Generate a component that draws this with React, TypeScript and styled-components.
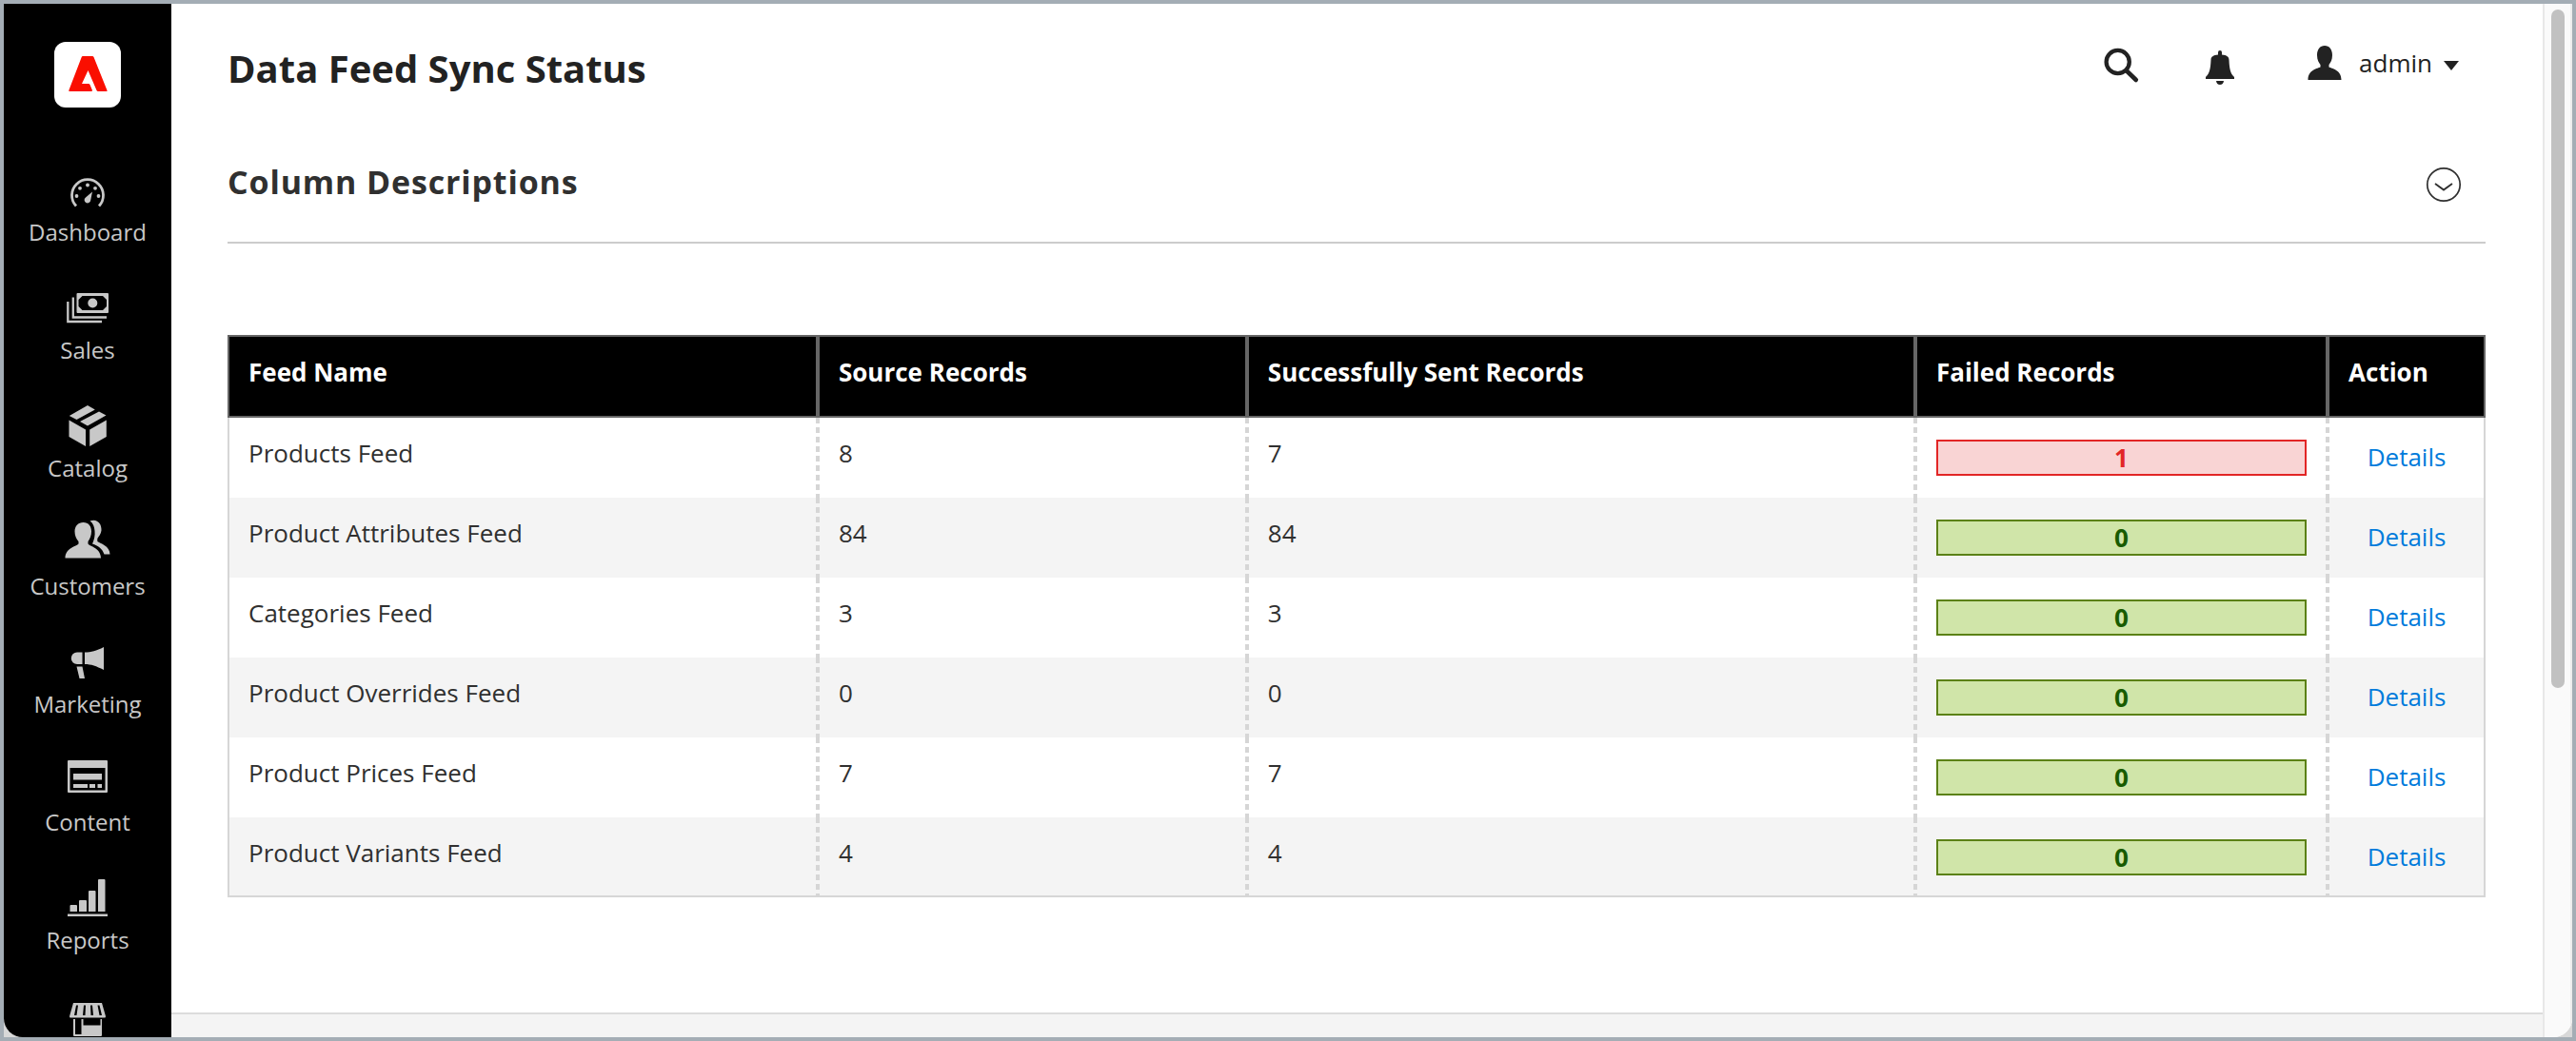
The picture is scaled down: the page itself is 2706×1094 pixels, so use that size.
import React from 'react';
import styled, { createGlobalStyle } from 'styled-components';

const Global = createGlobalStyle`
  *, *::before, *::after { box-sizing: border-box; }
  html { height: 100%; }
  body { height: 100%; margin: 0; font-family: 'Open Sans', 'Noto Sans', sans-serif; font-size: 26px; line-height: 36px; color: #303030; background: #a4adb5; }
  #root { height: 100%; }
  button { font: inherit; color: inherit; background: none; border: 0; padding: 0; cursor: pointer; }
`;

const Frame = styled.div`
  height: 100vh;
  border: 4px solid #a4adb5;
  background: #d8d8d8;
  display: flex;
`;

const Window = styled.div`
  flex: 1;
  min-width: 0;
  display: flex;
  overflow: hidden;
  background: #fff;
  border-radius: 0 0 20px 20px;
`;

const Sidebar = styled.nav`
  flex: 0 0 176px;
  background: #000;
  display: flex;
  flex-direction: column;
  align-items: center;
  overflow: hidden;
`;

const Logo = styled.a`
  display: flex;
  margin: 40px 0 51px;
`;

const Menu = styled.ul`
  list-style: none;
  margin: 0;
  padding: 0;
  width: 100%;
`;

const MenuLink = styled.a`
  height: 124px;
  padding-top: 12px;
  display: flex;
  flex-direction: column;
  align-items: center;
  gap: 4px;
  color: #c8c8c8;
  font-size: 24px;
  line-height: 32px;
  text-decoration: none;
`;

const MenuIcon = styled.svg`
  width: 60px;
  height: 48px;
  overflow: visible;
  fill: currentColor;
`;

const Page = styled.div`
  flex: 1;
  min-width: 0;
  display: flex;
  flex-direction: column;
`;

const Main = styled.main`
  flex: 1;
  padding: 34px 60px 0 59px;
`;

const Header = styled.header`
  display: flex;
  align-items: flex-start;
  justify-content: space-between;
  padding-right: 28px;
`;

const Title = styled.h1`
  margin: 0;
  font-size: 40px;
  line-height: 68px;
  font-weight: 700;
  color: #222;
`;

const Tools = styled.div`
  display: flex;
  gap: 64px;
  color: #222;
  svg { fill: currentColor; }
`;

const IconButton = styled.button`
  display: flex;
`;

const UserButton = styled.button`
  display: flex;
  align-items: center;
  padding-left: 8px;
`;

const UserName = styled.span`
  margin: 0 12px 0 18px;
`;

const Section = styled.section`
  margin-top: 40px;
  height: 110px;
  border-bottom: 2px solid #ccc;
`;

const SectionToggle = styled.button`
  width: 100%;
  padding: 23px 25px 0 0;
  display: flex;
  justify-content: space-between;
  align-items: flex-end;
`;

const SectionTitle = styled.h2`
  margin: 0;
  font-size: 34px;
  line-height: 44px;
  font-weight: 700;
  letter-spacing: .025em;
`;

const Table = styled.table`
  width: 100%;
  margin-top: 96px;
  table-layout: fixed;
  border-collapse: separate;
  border-spacing: 0;
`;

const Col = styled.col<{ $share: string }>`
  width: ${(p) => p.$share};
`;

const HeadCell = styled.th`
  height: 87px;
  padding: 19px 20px;
  vertical-align: top;
  text-align: left;
  font-weight: 700;
  color: #fff;
  background: #000;
  border: 2px solid #666;
  border-left-width: 0;
  border-right: 4px solid #666;
  &:first-child { border-left-width: 2px; }
  &:last-child { border-right-width: 2px; }
`;

const Row = styled.tr`
  &:nth-child(even) { background: #f4f4f4; }
  &:last-child td { border-bottom: 2px solid #d6d6d6; }
`;

const Cell = styled.td`
  height: 84px;
  padding: 19px 24px 0 20px;
  vertical-align: top;
  background: repeating-linear-gradient(#d6d6d6 0 6px, transparent 6px 10px) right top / 4px 100% no-repeat;
  &:first-child { border-left: 2px solid #d6d6d6; }
  &:last-child {
    padding: 23px 20px 0;
    border-right: 2px solid #d6d6d6;
    background: none;
    text-align: center;
  }
`;

const Count = styled.span<{ $failed: boolean }>`
  display: block;
  margin-top: 4px;
  border: 2px solid ${(p) => (p.$failed ? '#e22626' : '#5b8116')};
  background: ${(p) => (p.$failed ? '#f9d4d4' : '#d0e5a9')};
  color: ${(p) => (p.$failed ? '#e22626' : '#185b00')};
  font-weight: 700;
  line-height: 34px;
  text-align: center;
`;

const DetailsLink = styled.a`
  color: #007bdb;
  text-decoration: none;
`;

const Footer = styled.footer`
  height: 26px;
  border-top: 2px solid #dcdcdc;
  background: #f4f4f4;
`;

const ScrollTrack = styled.div`
  flex: 0 0 31px;
  padding: 6px 6px 0 7px;
  border-left: 2px solid #e8e8e8;
  border-right: 2px solid #ececec;
  background: #fafafa;
`;

const ScrollThumb = styled.div`
  height: 66%;
  border-radius: 8px;
  background: #c1c1c1;
`;

const menu = [
  {
    label: 'Dashboard',
    icon: (
      <>
        <path d="M18 40.500A16.500 16.500 0 1 1 42 40.500" fill="none" stroke="currentColor" strokeWidth="2.800" />
        <circle cx="18.500" cy="30" r="1.900" /><circle cx="22" cy="21.800" r="1.900" /><circle cx="30" cy="18.500" r="1.900" /><circle cx="38" cy="21.800" r="1.900" /><circle cx="41.500" cy="30" r="1.900" />
        <path d="M35 25.500L33.200 34.500A3.300 3.300 0 1 1 28 31.500Z" />
      </>
    ),
  },
  {
    label: 'Sales',
    icon: (
      <g transform="translate(0 -4)">
        <path fillRule="evenodd" d="M19.500 12H51a1 1 0 0 1 1 1V32a1 1 0 0 1-1 1H19.500a1 1 0 0 1-1-1V13a1 1 0 0 1 1-1ZM24.500 15L20.500 19V26L24.500 30H46L50 26V19L46 15Z" />
        <circle cx="35.300" cy="22.500" r="5" />
        <path d="M14.800 16.500V37.500H50M9.300 21V42H45" fill="none" stroke="currentColor" strokeWidth="2.300" />
      </g>
    ),
  },
  {
    label: 'Catalog',
    icon: (
      <path transform="translate(0 -3.500)" d="M10.800 16.500L30 5.500L37.800 10L18.500 20.500ZM22 22.500L42 12L49.500 16L30 27ZM10.500 21L28 31V48.500L10.500 38.500ZM49.800 21L32.200 31V48.500L49.800 38.500Z" />
    ),
  },
  {
    label: 'Customers',
    icon: (
      <g transform="translate(0 -6)">
        <path d="M25.500 7C31 7 34 11 34 16.500C34 21 32.500 24 30.500 27V29.500C32 32 44 34 44 44.500H6.500C6.500 34 18.500 32 20.500 29.500V27C18 24 16.500 21 16.500 16.500C16.500 11 20 7 25.500 7Z" />
        <path d="M32.500 5.500C40 2.500 45 8.500 44.500 15.500C44 19 42 21.500 40.300 24V27C43 29 53.500 31.500 53.500 40.500H47.500C45.500 34.500 41 31.500 35 29.500C37 25 38 21 37.500 16C37 11.500 36 8 32.500 5.500Z" />
      </g>
    ),
  },
  {
    label: 'Marketing',
    icon: (
      <path transform="translate(0 -5)" d="M24.500 18.500V31H19A6 6 0 0 1 19 18.500ZM27 18.500C34 18.500 39 17 47 13V37C39 33 34 31 27 31ZM18.500 33.500H24.500L27 46H21.500Z" />
    ),
  },
  {
    label: 'Content',
    icon: (
      <g transform="translate(0 -4)">
        <path fillRule="evenodd" d="M10 7H50Q51 7 51 8V40Q51 41 50 41H10Q9 41 9 40V8Q9 7 10 7ZM11.500 15V38.500H48.500V15Z" />
        <path d="M15 21H45V27.500H15ZM15 32H30V36H15ZM32 32H38V36H32ZM40.500 32H45V36H40.500Z" />
      </g>
    ),
  },
  {
    label: 'Reports',
    icon: (
      <path transform="translate(0 -4)" d="M9 44.500H51V47H9ZM11.500 42V36Q11.500 35 12.500 35H18Q19 35 19 36V42ZM21 42V31Q21 30 22 30H28Q29 30 29 31V42ZM31 42V21Q31 20 32 20H37.500Q38.500 20 38.500 21V42ZM41 42V9Q41 8 42 8H47.500Q48.500 8 48.500 9V42Z" />
    ),
  },
  {
    label: 'Stores',
    iconOnly: true,
    icon: (
      <g transform="translate(0 -4)">
        <path d="M15 14H45L49 28Q49 29.500 48 29.500H12Q11 29.500 11 28Z" />
        <path d="M18 16.500H20L18.500 27H16ZM26 16.500H28L27.500 27H25ZM33 16.500H35L36 27H33.500ZM40.500 16.500H42.500L45 27H42.500Z" fill="#000" />
        <path fillRule="evenodd" d="M15 31H45V48Q45 49 44 49H16Q15 49 15 48ZM17 31V47H23.500V31ZM25.500 31V37.500H43.500V31Z" />
      </g>
    ),
  },
];

const feeds = [
  { name: 'Products Feed', source: 8, sent: 7, failed: 1 },
  { name: 'Product Attributes Feed', source: 84, sent: 84, failed: 0 },
  { name: 'Categories Feed', source: 3, sent: 3, failed: 0 },
  { name: 'Product Overrides Feed', source: 0, sent: 0, failed: 0 },
  { name: 'Product Prices Feed', source: 7, sent: 7, failed: 0 },
  { name: 'Product Variants Feed', source: 4, sent: 4, failed: 0 },
];

export default function App() {
  return (
    <Frame>
      <Global />
      <Window>
        <Sidebar aria-label="Main menu">
          <Logo href="#" aria-label="Home">
            <svg width="70" height="69" viewBox="0 0 70 69">
              <rect width="70" height="69" rx="12" fill="#fff" />
              <path d="M30 15H40Q41 15 41.500 16L55.500 51Q56 52 55 52H46Q45 52 44.500 51L35.500 30L29 44H36Q37 44 37.500 45L40 51Q40 52 39 52H16Q15 52 15.300 51L28.700 16Q29 15 30 15Z" fill="#fa0f00" />
            </svg>
          </Logo>
          <Menu>
            {menu.map((item) => (
              <li key={item.label}>
                <MenuLink href="#" aria-label={item.label}>
                  <MenuIcon viewBox="0 0 60 48" aria-hidden="true">{item.icon}</MenuIcon>
                  {!item.iconOnly && item.label}
                </MenuLink>
              </li>
            ))}
          </Menu>
        </Sidebar>
        <Page>
          <Main>
            <Header>
              <Title>Data Feed Sync Status</Title>
              <Tools>
                <IconButton aria-label="Search">
                  <svg width="40" height="56" viewBox="0 0 40 56">
                    <circle cx="16.700" cy="27" r="12.100" fill="none" stroke="currentColor" strokeWidth="4.300" />
                    <path d="M26 36.500L35.800 46" stroke="currentColor" strokeWidth="4.600" strokeLinecap="round" />
                  </svg>
                </IconButton>
                <IconButton aria-label="Notifications">
                  <svg width="40" height="56" viewBox="0 0 40 56">
                    <path d="M18 17Q18 15 20 15T22 17V19.500C27 20 29.500 21.500 29.500 25C30 35 31 39 35 43V45H5V43C9 39 10 35 10.500 25C10.500 21.500 13 20 18 19.500ZM16 47H24Q23.500 51 20 51T16 47Z" />
                  </svg>
                </IconButton>
                <UserButton>
                  <svg width="36" height="56" viewBox="0 0 36 56">
                    <path d="M18 10C23 10 26 14 26 20C26 25 24 28 22.500 30V32.500C25 34 35.500 35 35.500 46H.5C.5 35 11 34 13.500 32.500V30C12 28 10 25 10 20C10 14 13 10 18 10Z" />
                  </svg>
                  <UserName>admin</UserName>
                  <svg width="16" height="16" viewBox="0 0 16 16"><path d="M0 6H16L8 16Z" /></svg>
                </UserButton>
              </Tools>
            </Header>
            <Section>
              <SectionToggle aria-expanded="false">
                <SectionTitle>Column Descriptions</SectionTitle>
                <svg width="38" height="38" viewBox="0 0 38 38" fill="none" stroke="#303030">
                  <circle cx="19" cy="19" r="17.200" strokeWidth="1.700" />
                  <path d="M10 18L19 24.500L28 18" strokeWidth="1.900" />
                </svg>
              </SectionToggle>
            </Section>
            <Table>
              <colgroup>
                <Col $share="26.22%" />
                <Col $share="19.01%" />
                <Col $share="29.6%" />
                <Col $share="18.26%" />
                <Col $share="6.91%" />
              </colgroup>
              <thead>
                <tr>
                  <HeadCell>Feed Name</HeadCell>
                  <HeadCell>Source Records</HeadCell>
                  <HeadCell>Successfully Sent Records</HeadCell>
                  <HeadCell>Failed Records</HeadCell>
                  <HeadCell>Action</HeadCell>
                </tr>
              </thead>
              <tbody>
                {feeds.map((feed) => (
                  <Row key={feed.name}>
                    <Cell>{feed.name}</Cell>
                    <Cell>{feed.source}</Cell>
                    <Cell>{feed.sent}</Cell>
                    <Cell><Count $failed={feed.failed > 0}>{feed.failed}</Count></Cell>
                    <Cell><DetailsLink href="#">Details</DetailsLink></Cell>
                  </Row>
                ))}
              </tbody>
            </Table>
          </Main>
          <Footer />
        </Page>
        <ScrollTrack><ScrollThumb /></ScrollTrack>
      </Window>
    </Frame>
  );
}
